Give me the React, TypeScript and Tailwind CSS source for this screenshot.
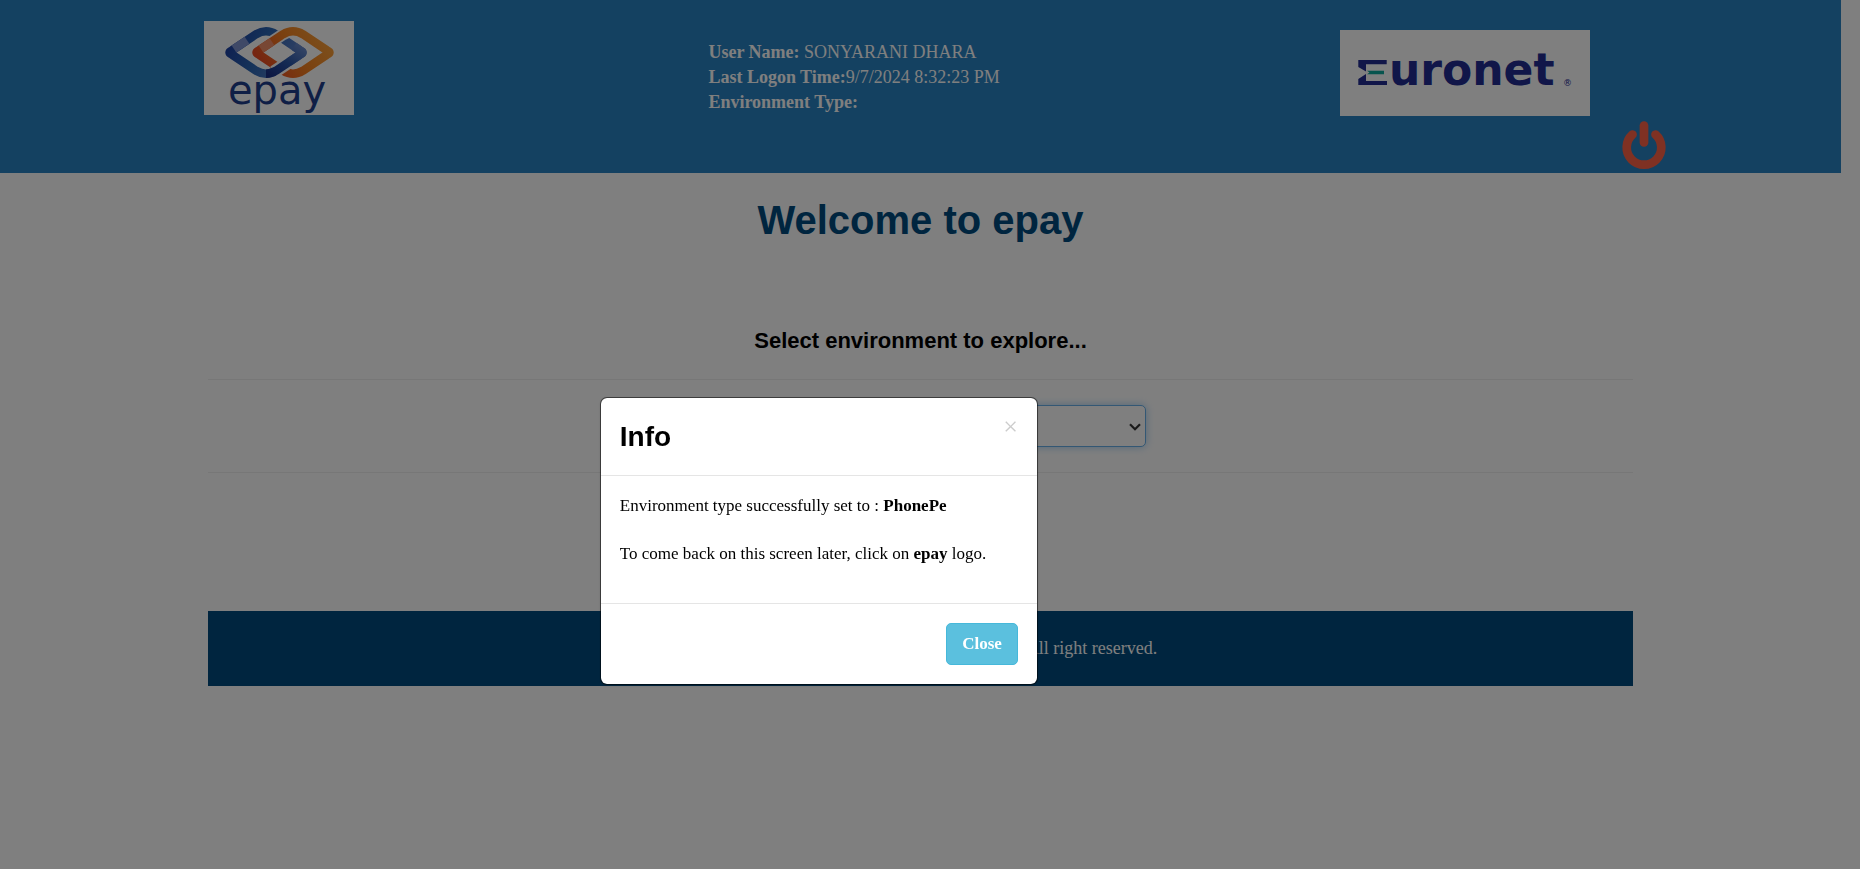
import React from "react";

const BLUE_RING =
  "M28 29.4 L52 13.3 Q57 10.2 62 10.2 Q67 10.2 72 13.3 L96 29.4 Q101 31.5 96 33.6 L72 49.7 Q67 52.8 62 52.8 Q57 52.8 52 49.7 L28 33.6 Q23 31.5 28 29.4 Z";
const ORANGE_RING =
  "M55 29.4 L79 13.3 Q84 10.2 89 10.2 Q94 10.2 99 13.3 L123 29.4 Q128 31.5 123 33.6 L99 49.7 Q94 52.8 89 52.8 Q84 52.8 79 49.7 L55 33.6 Q50 31.5 55 29.4 Z";

function EpayLogo() {
  return (
    <svg viewBox="0 0 150 94" className="block h-[94px] w-[150px] bg-white" role="img" aria-label="epay">
      <defs>
        <linearGradient id="blueRing" x1="0" y1="0" x2="1" y2="0.3">
          <stop offset="0" stopColor="#1c3ba0" />
          <stop offset="0.5" stopColor="#2a66b4" />
          <stop offset="1" stopColor="#5c80c8" />
        </linearGradient>
        <linearGradient id="blueLow" x1="1" y1="0" x2="0" y2="1">
          <stop offset="0" stopColor="#6a8bcc" />
          <stop offset="0.5" stopColor="#2a56a8" />
          <stop offset="1" stopColor="#1a2f86" />
        </linearGradient>
        <linearGradient id="orangeRing" x1="0" y1="0.6" x2="1" y2="0.2">
          <stop offset="0" stopColor="#ec4a24" />
          <stop offset="0.5" stopColor="#f58220" />
          <stop offset="1" stopColor="#f9a13a" />
        </linearGradient>
      </defs>
      <g fill="none" strokeLinejoin="round">
        <path d={BLUE_RING} stroke="url(#blueRing)" strokeWidth="8.5" />
        <path d="M30 28 L43 19.3" stroke="#7f93cf" strokeWidth="8.5" />
        <path d="M60 26 L79 13.3 Q84 10.2 89 10.2" stroke="#fff" strokeWidth="12" />
        <path d={ORANGE_RING} stroke="url(#orangeRing)" strokeWidth="8.5" />
        <path d="M57 28 L68 20.7" stroke="#f08e68" strokeWidth="8.5" />
        <path d="M85 41 L70 51" stroke="#fff" strokeWidth="13" />
        <path
          d="M90 25.400 L96 29.400 Q101 31.500 96 33.600 L72 49.700 Q67 52.800 62 52.800"
          stroke="url(#blueLow)"
          strokeWidth="8.5"
        />
      </g>
      <text x="73" y="83" textAnchor="middle" fill="#1f3f8c" className="font-['DejaVu_Sans'] text-[40px]">
        epay
      </text>
    </svg>
  );
}

function EuronetLogo() {
  return (
    <svg viewBox="0 0 250 86" className="block h-[86px] w-[250px] bg-white" role="img" aria-label="Euronet">
      <path d="M18.300 30 H46.700 V34.200 H26 V41.500 L18.300 37 Z" fill="#222d92" />
      <path d="M18.300 55 H47 V51 H26 V44 L18.300 49 Z" fill="#222d92" />
      <path d="M27 40.700 H44 V44.300 H27 L29.500 42.500 Z" fill="#0fa89c" />
      <text x="49" y="55" fill="#222d92" className="font-['DejaVu_Sans'] text-[44px] font-bold">
        uronet
      </text>
      <text x="223" y="56" fill="#222d92" className="font-['DejaVu_Sans'] text-[9px]">
        ®
      </text>
    </svg>
  );
}

function PowerIcon() {
  return (
    <svg
      viewBox="0 0 44 50"
      className="block h-[50px] w-11"
      fill="none"
      stroke="#ff6347"
      strokeWidth="8.7"
      strokeLinecap="round"
      aria-hidden="true"
    >
      <path d="M10.500 14.500 A17.300 17.300 0 1 0 33.500 14.500" />
      <path d="M22 5.500 V22.500" />
    </svg>
  );
}

function Header() {
  return (
    <header className="grid h-[173px] grid-cols-[30.8%_38.6%_17.2%_1fr] bg-[#2882c2] pl-[11.1%] text-[18px] leading-[25px] text-white">
      <a href="#home" className="mt-[21px] self-start justify-self-start">
        <EpayLogo />
      </a>
      <div className="pt-10">
        <p><b>User Name:</b> SONYARANI DHARA</p>
        <p><b>Last Logon Time:</b>9/7/2024 8:32:23 PM</p>
        <p><b>Environment Type:</b></p>
      </div>
      <div className="pt-[30px]">
        <EuronetLogo />
      </div>
      <button type="button" aria-label="Log off" className="mb-[3px] self-end justify-self-start">
        <PowerIcon />
      </button>
    </header>
  );
}

function InfoDialog() {
  return (
    <div className="fixed inset-0 bg-black/50 pl-[32.25%] pt-[397px]">
      <section
        role="dialog"
        aria-modal="true"
        aria-labelledby="dialog-title"
        className="w-[438px] rounded-[7px] border border-black/50 bg-white bg-clip-padding text-black shadow-sm"
      >
        <div className="flex items-start justify-between border-b border-[#e5e5e5] px-[19px] pb-[18px] pt-[19px]">
          <h4 id="dialog-title" className="font-['Liberation_Sans',sans-serif] text-[28px] font-bold leading-10">
            Info
          </h4>
          <button type="button" aria-label="Dismiss" className="text-[26px] leading-5 text-[#ccc]">
            ×
          </button>
        </div>
        <div className="px-[19px] pb-[37px] pt-[18px] text-[17px] leading-6">
          <p>Environment type successfully set to : <b>PhonePe</b></p>
          <p className="mt-6">To come back on this screen later, click on <b>epay</b> logo.</p>
        </div>
        <div className="flex justify-end border-t border-[#e5e5e5] px-[19px] py-[19px]">
          <button
            type="button"
            className="h-[42px] rounded-[5px] border border-[#46b8da] bg-[#5bc0de] px-[15px] text-[17px] font-bold text-white"
          >
            Close
          </button>
        </div>
      </section>
    </div>
  );
}

export default function App() {
  return (
    <div className="min-h-screen bg-white pr-[19px] font-['Liberation_Serif',serif] text-black">
      <Header />
      <main className="mx-auto w-[77.4%] text-center">
        <h1 className="pt-6 font-['Liberation_Sans',sans-serif] text-[40px] font-bold leading-[46px] text-[#004b7f]">
          Welcome to epay
        </h1>
        <h3 className="mt-[83px] font-['Liberation_Sans',sans-serif] text-[22px] font-bold leading-[30px]">
          <label htmlFor="environment">Select environment to explore...</label>
        </h3>
        <div className="mt-[23px] flex justify-center border-y border-[#eee] py-[25px]">
          <div className="relative w-[451px]">
            <select
              id="environment"
              className="block h-[42px] w-full appearance-none rounded-[5px] border border-[#66afe9] bg-white px-3 text-[18px] shadow-[0_0_9px_rgba(102,175,233,0.6)] outline-none"
            />
            <svg
              viewBox="0 0 12 8"
              className="pointer-events-none absolute right-[5px] top-[18px] h-2 w-3"
              fill="none"
              stroke="#333"
              strokeWidth="2.2"
              aria-hidden="true"
            >
              <path d="M1 1.200 L6 6.200 L11 1.200" />
            </svg>
          </div>
        </div>
        <footer className="mt-[138px] bg-[#004b7f] py-[25px] pl-[24%] text-[18px] leading-[25px] text-white">
          All right reserved.
        </footer>
      </main>
      <InfoDialog />
    </div>
  );
}
